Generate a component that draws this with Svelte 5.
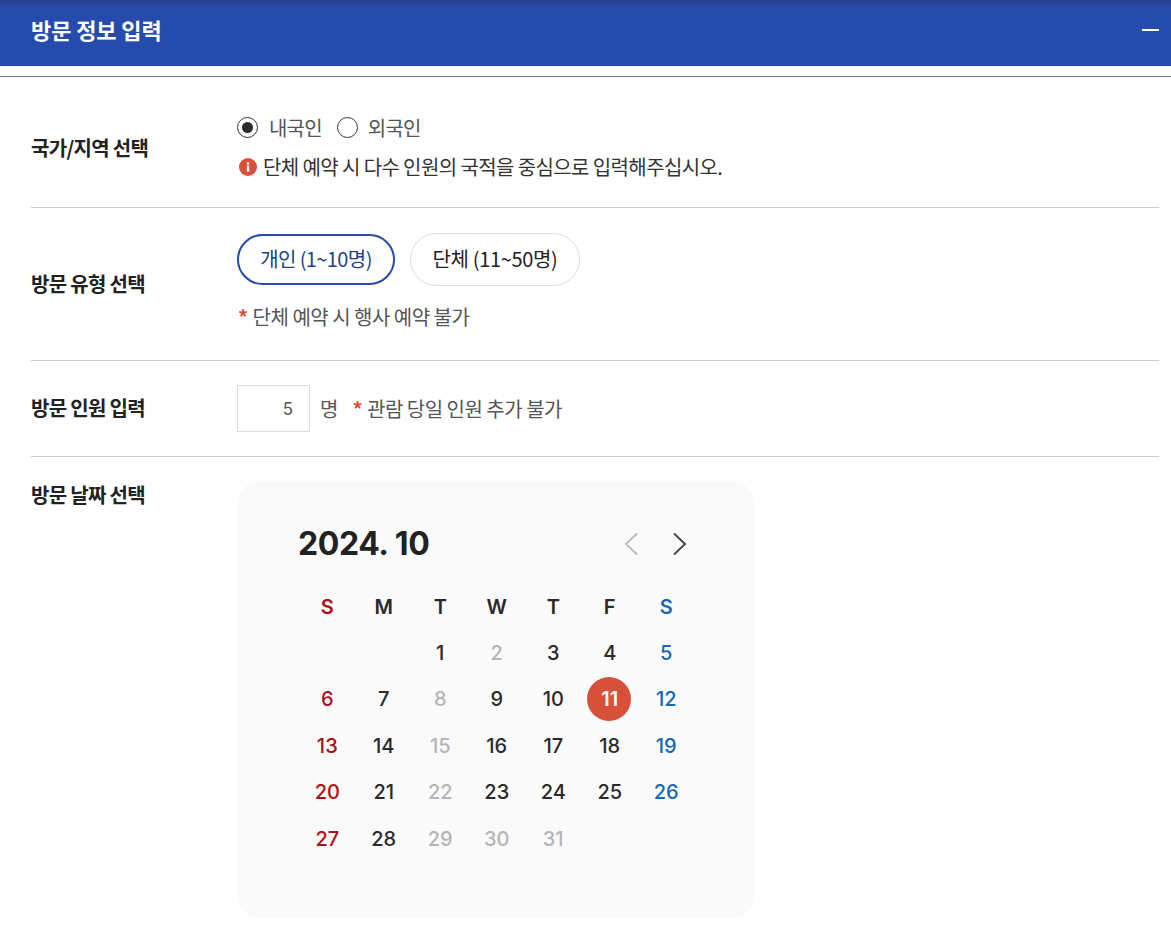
<script lang="ts">
  const week = ['S', 'M', 'T', 'W', 'T', 'F', 'S'];
  const blanks = [0, 1];
  const off = [2, 8, 15, 22, 29, 30, 31];
  const days = Array.from({ length: 31 }, (_, i) => i + 1);

  // October 2024 is drawn starting on Tuesday in this layout
  function dayClass(d: number) {
    const col = (d + blanks.length - 1) % 7;
    if (d === 11) return 'day selected';
    if (off.includes(d)) return 'day off';
    if (col === 0) return 'day sun';
    if (col === 6) return 'day sat';
    return 'day';
  }
</script>

<section class="panel">
  <header class="head">
    <h2>방문 정보 입력</h2>
    <span class="collapse"></span>
  </header>

  <div class="body">
    <div class="row row-nation">
      <div class="label">국가/지역 선택</div>
      <div class="field">
        <div class="radios">
          <span class="radio checked"></span><span class="radio-text">내국인</span>
          <span class="radio second"></span><span class="radio-text">외국인</span>
        </div>
        <p class="info">
          <svg viewBox="0 0 18 18" width="18" height="18">
            <circle cx="9" cy="9" r="9" fill="#d7503a" />
            <rect x="7.9" y="7.6" width="2.3" height="6" fill="#fff" />
            <rect x="7.9" y="4.4" width="2.3" height="2.2" fill="#fff" />
          </svg>
          단체 예약 시 다수 인원의 국적을 중심으로 입력해주십시오.
        </p>
      </div>
    </div>

    <div class="row row-type">
      <div class="label">방문 유형 선택</div>
      <div class="field">
        <div class="pills">
          <button class="pill active">개인 (1~10명)</button>
          <button class="pill">단체 (11~50명)</button>
        </div>
        <p class="note"><span class="star">*</span> 단체 예약 시 행사 예약 불가</p>
      </div>
    </div>

    <div class="row row-count">
      <div class="label">방문 인원 입력</div>
      <div class="field inline">
        <input class="count" value="5" />
        <span class="unit">명</span>
        <span class="note"><span class="star">*</span> 관람 당일 인원 추가 불가</span>
      </div>
    </div>

    <div class="row row-date">
      <div class="label">방문 날짜 선택</div>
      <div class="calendar">
        <div class="cal-head">
          <strong>2024. 10</strong>
          <div class="arrows">
            <svg viewBox="0 0 16 24" width="16" height="24"><path d="M14 1.5 3 12l11 10.5" fill="none" stroke="#bdbdbd" stroke-width="2" /></svg>
            <svg viewBox="0 0 16 24" width="16" height="24"><path d="M2 1.5 13 12 2 22.5" fill="none" stroke="#444b50" stroke-width="2" /></svg>
          </div>
        </div>
        <div class="grid">
          {#each week as w, i}
            <span class="dow" class:sun={i === 0} class:sat={i === 6}>{w}</span>
          {/each}
          {#each blanks as b (b)}
            <span></span>
          {/each}
          {#each days as d (d)}
            <span class={dayClass(d)}><span>{d}</span></span>
          {/each}
        </div>
      </div>
    </div>
  </div>
</section>

<style>
  :global(body) {
    margin: 0;
    background: #fff;
    font-family: "Noto Sans CJK KR", "Noto Sans", sans-serif;
    color: #222;
  }

  .panel {
    width: 1171px;
  }

  .head {
    height: 66px;
    box-sizing: border-box;
    padding: 0 12px 7px 31px;
    display: flex;
    align-items: center;
    justify-content: space-between;
    background: linear-gradient(#253f8d 0, #254cad 9px);
    box-shadow: 0 1px 0 #eee;
  }

  h2 {
    margin: -1px 0 0;
    font-size: 22px;
    line-height: 30px;
    font-weight: 700;
    letter-spacing: -0.1px;
    color: #fff;
  }

  .collapse {
    width: 17px;
    height: 2px;
    background: #fff;
  }

  .body {
    margin-top: 10px;
    padding: 0 12px 0 31px;
    border-top: 1px solid #777;
  }

  .row {
    display: flex;
    box-sizing: border-box;
    border-bottom: 1px solid #ccc;
  }

  .row-nation {
    height: 131px;
    padding-top: 11px;
    align-items: center;
  }

  .row-type {
    height: 153px;
    align-items: center;
  }

  .row-type .field {
    margin-top: -6px;
  }

  .row-count {
    height: 96px;
    align-items: center;
  }

  .row-count .label {
    margin-top: -2px;
  }

  .row-date {
    border-bottom: 0;
    padding-top: 24px;
  }

  .label {
    width: 206px;
    flex: none;
    font-size: 20px;
    line-height: 28px;
    font-weight: 700;
    letter-spacing: -0.7px;
    color: #222;
  }

  .radios {
    display: flex;
    align-items: center;
    height: 24px;
  }

  .radio {
    width: 19px;
    height: 19px;
    border: 1px solid #333;
    border-radius: 50%;
    background: #fff;
    margin-right: 11px;
    position: relative;
  }

  .radio.second {
    margin-left: 15px;
    margin-right: 10px;
  }

  .radio.checked::after {
    content: "";
    position: absolute;
    inset: 4px;
    border-radius: 50%;
    background: #2b2b2b;
  }

  .radio-text {
    font-size: 20px;
    letter-spacing: -0.8px;
    color: #555;
  }

  .info {
    display: flex;
    align-items: center;
    gap: 6px;
    margin: 15px 0 0 2px;
    font-size: 20px;
    line-height: 26px;
    letter-spacing: -0.6px;
    color: #333;
  }

  .pills {
    display: flex;
    gap: 15px;
    align-items: center;
  }

  .pill {
    height: 53px;
    width: 170px;
    padding: 0 0 2px;
    border: 1px solid #ddd;
    border-radius: 27px;
    background: #fff;
    font: inherit;
    font-size: 20px;
    letter-spacing: -0.35px;
    color: #222;
  }

  .pill.active {
    width: 158px;
    height: 51px;
    padding: 0 0 2px;
    border: 2px solid #254cad;
    letter-spacing: -0.6px;
    color: #254383;
  }

  .note {
    font-size: 20px;
    letter-spacing: -0.5px;
    color: #555;
  }

  p.note {
    margin: 18px 0 0 1px;
    line-height: 26px;
  }

  .star {
    margin-right: 1px;
    color: #d7503a;
    font-weight: 700;
  }

  .inline {
    display: flex;
    align-items: center;
  }

  .count {
    width: 73px;
    height: 47px;
    box-sizing: border-box;
    padding: 0 16px;
    border: 1px solid #ddd;
    border-radius: 0;
    outline: 0;
    text-align: right;
    font-family: "Inter", sans-serif;
    font-size: 17px;
    color: #555;
  }

  .unit {
    margin: 0 14px 0 10px;
    font-size: 20px;
    line-height: 28px;
    color: #555;
  }

  .calendar {
    width: 518px;
    height: 437px;
    box-sizing: border-box;
    padding: 36px 60px 0 61px;
    border-radius: 24px;
    background: #fafafa;
    font-family: "Inter", sans-serif;
  }

  .cal-head {
    display: flex;
    align-items: center;
    justify-content: space-between;
    height: 52px;
  }

  .cal-head strong {
    font-size: 32px;
    font-weight: 700;
    letter-spacing: -0.4px;
    color: #222;
  }

  .arrows {
    display: flex;
    gap: 33px;
    margin: 2px 7px 0 0;
  }

  .grid {
    display: grid;
    grid-template-columns: repeat(7, 56.5px);
    grid-auto-rows: 46.4px;
    margin-top: 14.5px;
    margin-left: 1px;
    justify-items: center;
    align-items: center;
    font-size: 20px;
    font-weight: 500;
    color: #2a2a2a;
  }

  .dow {
    font-weight: 600;
    color: #2a2a2a;
  }

  .dow.sun,
  .day.sun {
    color: #ad0f16;
  }

  .dow.sat,
  .day.sat {
    color: #1469b3;
  }

  .day.off {
    color: #b5b5b5;
  }

  .day.selected {
    width: 44px;
    height: 44px;
    box-sizing: border-box;
    margin-left: -2px;
    padding-left: 2px;
    display: flex;
    align-items: center;
    justify-content: center;
    border-radius: 50%;
    background: #d7503a;
    color: #fff;
    font-weight: 600;
  }
</style>
